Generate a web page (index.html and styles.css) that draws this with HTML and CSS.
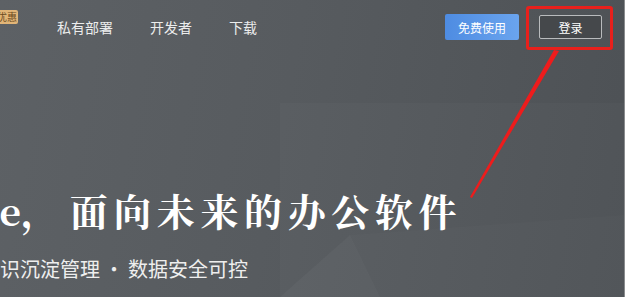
FILE: index.html
```html
<!DOCTYPE html>
<html lang="zh-CN">
<head>
<meta charset="utf-8">
<title>WPS</title>
<link rel="stylesheet" href="styles.css">
</head>
<body>
<div class="page">
  <svg class="deco" width="625" height="297" viewBox="0 0 625 297">
    <rect x="280" y="103" width="345" height="194" fill="#ffffff" fill-opacity="0.018"/>
    <polygon points="280,297 350,235 625,215 625,297" fill="#ffffff" fill-opacity="0.015"/>
    <polygon points="280,297 350,235 380,297" fill="#ffffff" fill-opacity="0.025"/>
  </svg>
  <header class="top">
    <div class="badge"><span>优惠</span></div>
    <nav class="nav">
      <a class="nav-item">私有部署</a>
      <a class="nav-item">开发者</a>
      <a class="nav-item">下载</a>
    </nav>
    <div class="actions">
      <button class="btn-primary">免费使用</button>
      <button class="btn-login">登录</button>
    </div>
  </header>
  <main class="hero">
    <h1 class="title"><span class="latin">ce</span><span class="comma">，</span>面向未来的办公软件</h1>
    <p class="sub">识沉淀管理<span class="dot">·</span>数据安全可控</p>
  </main>
  <div class="mark-box"></div>
  <svg class="arrow" width="625" height="297" viewBox="0 0 625 297">
    <polygon points="554,50 559,51 472,198 470,197" fill="#ee1c1c"/>
  </svg>
</div>
</body>
</html>
```
FILE: styles.css
```css
html, body {
  margin: 0;
  padding: 0;
}
body {
  width: 625px;
  height: 297px;
  overflow: hidden;
  font-family: "Noto Sans CJK SC", "Noto Sans", sans-serif;
}
.page {
  position: relative;
  width: 625px;
  height: 297px;
  overflow: hidden;
  background: linear-gradient(100deg, #5d6165 0%, #575b5f 45%, #4d5155 100%);
  box-sizing: border-box;
  border-right: 1px solid #8a8c8e;
}
.deco {
  position: absolute;
  left: 0;
  top: 0;
}
.top {
  position: relative;
  display: flex;
  align-items: center;
  height: 54px;
}
.badge {
  align-self: flex-start;
  margin-top: 10px;
  width: 18px;
  height: 14px;
  overflow: hidden;
  background: #e2b577;
  border-radius: 0 2px 2px 0;
  display: flex;
  justify-content: flex-end;
  align-items: center;
}
.badge span {
  font-size: 10px;
  line-height: 14px;
  color: #6a4a1e;
  white-space: nowrap;
  padding-right: 1px;
}
.nav {
  display: flex;
  gap: 37px;
  margin-left: 39px;
}
.nav-item {
  font-size: 14px;
  color: #eceded;
  line-height: 20px;
}
.actions {
  margin-left: auto;
  margin-right: 22px;
  display: flex;
  align-items: center;
  gap: 20px;
}
.btn-primary {
  width: 74px;
  height: 26px;
  border: none;
  border-radius: 2px;
  background: linear-gradient(90deg, #4e8ce2, #6aa4ee);
  color: #ffffff;
  font-family: inherit;
  font-size: 12px;
  padding: 0;
}
.btn-login {
  width: 63px;
  height: 24px;
  border: 1px solid #b9bbbd;
  border-radius: 2px;
  background: #45484b;
  color: #ffffff;
  font-family: inherit;
  font-size: 12px;
  padding: 0;
}
.hero {
  position: relative;
  padding-top: 137px;
}
.title {
  margin: 0 0 0 -22px;
  font-family: "Noto Serif CJK SC", "Liberation Serif", "Noto Sans CJK SC", serif;
  font-weight: 700;
  font-size: 38px;
  line-height: 38px;
  letter-spacing: 5.6px;
  color: #ffffff;
  white-space: nowrap;
}
.latin {
  letter-spacing: 0;
}
.comma {
  margin-right: 5px;
}
.sub {
  margin: 30px 0 0 0;
  font-size: 20px;
  line-height: 20px;
  color: #eeeeee;
  white-space: nowrap;
}
.dot {
  margin: 0 4px;
}
.mark-box {
  position: absolute;
  left: 526px;
  top: 6px;
  width: 87px;
  height: 44px;
  box-sizing: border-box;
  border: 3px solid #e8201c;
  border-radius: 3px;
}
.arrow {
  position: absolute;
  left: 0;
  top: 0;
}
```
